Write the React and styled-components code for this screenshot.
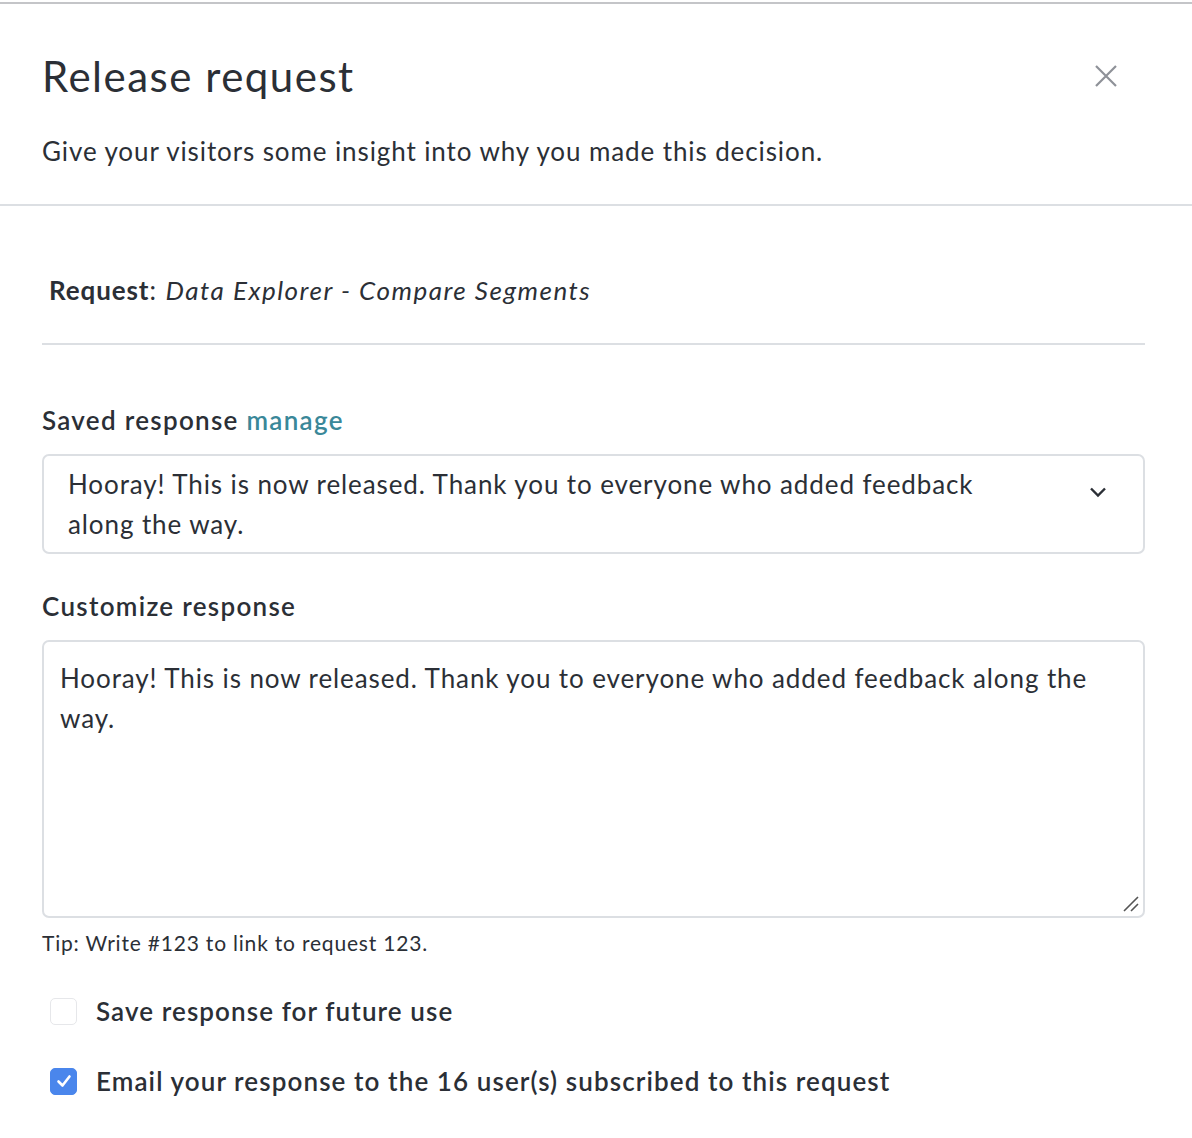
import styled, { createGlobalStyle } from "styled-components";

const GlobalStyle = createGlobalStyle`
    html, body {
        margin: 0;
        padding: 0;
        background: #ffffff;
    }
    body {
        font-family: Lato, "Open Sans", sans-serif;
        color: #2b2f36;
        letter-spacing: 0.9px;
    }
`;

const Modal = styled.div`
    width: 1192px;
    border-top: 2px solid #c4c5c8;
    margin-top: 2px;
`;

const Header = styled.div`
    padding: 44px 42px 35px 42px;
    border-bottom: 2px solid #dcdfe3;
    .titleRow {
        display: flex;
        justify-content: space-between;
        align-items: center;
        height: 56px;
    }
`;

const Title = styled.h1`
    margin: 0;
    font-size: 42px;
    font-weight: 400;
    letter-spacing: 1.5px;
    color: #2b2f36;
`;

const CloseButton = styled.button`
    border: none;
    background: none;
    padding: 0;
    margin-right: 33px;
    color: #8e9198;
    display: flex;
    cursor: pointer;
`;

const Subtitle = styled.p`
    margin: 29px 0 0 0;
    font-size: 26px;
    line-height: 36px;
`;

const Body = styled.div`
    padding: 0 47px 0 42px;
`;

const RequestLine = styled.div`
    padding: 68px 7px 37px 7px;
    font-size: 26px;
    line-height: 32px;
    letter-spacing: 1.5px;
    border-bottom: 2px solid #dcdfe3;
    strong {
        font-weight: 700;
        letter-spacing: 0.9px;
    }
    em {
        font-style: italic;
    }
`;

const Label = styled.div`
    font-size: 26px;
    font-weight: 600;
    line-height: 32px;
    letter-spacing: 1.3px;
    margin: ${(p) => p.$top}px 0 ${(p) => p.$bottom}px 0;
    a {
        color: #3a8899;
        text-decoration: none;
        font-weight: 600;
    }
`;

const Select = styled.div`
    display: flex;
    align-items: flex-start;
    justify-content: space-between;
    border: 2px solid #dcdfe3;
    border-radius: 7px;
    padding: 8px 36px 8px 24px;
    font-size: 26px;
    line-height: 40px;
    .text {
        max-width: 940px;
    }
    .chevron {
        margin-top: 22px;
        color: #2b2f36;
    }
`;

const TextArea = styled.div`
    position: relative;
    border: 2px solid #dcdfe3;
    border-radius: 7px;
    height: 278px;
    padding: 16px 20px 0 16px;
    box-sizing: border-box;
    font-size: 26px;
    line-height: 40px;
    .grip {
        position: absolute;
        right: 4px;
        bottom: 4px;
    }
`;

const Tip = styled.div`
    font-size: 21px;
    line-height: 28px;
    margin-top: 11px;
    letter-spacing: 0.8px;
`;

const CheckRow = styled.label`
    display: flex;
    align-items: center;
    gap: 19px;
    padding-left: 8px;
    margin-top: ${(p) => p.$top}px;
    font-size: 26px;
    font-weight: 600;
    line-height: 32px;
    letter-spacing: 1.1px;
`;

const Box = styled.span`
    width: 27px;
    height: 27px;
    box-sizing: border-box;
    border-radius: 5px;
    display: flex;
    align-items: center;
    justify-content: center;
    flex-shrink: 0;
    background: ${(p) => (p.$checked ? "#4a86ec" : "#ffffff")};
    border: 1px solid ${(p) => (p.$checked ? "#4a86ec" : "#e6e7ea")};
`;

const Check = ({ checked, label, top }) => (
    <CheckRow $top={top}>
        <Box $checked={checked}>
            {checked && (
                <svg width="18" height="18" viewBox="0 0 18 18" fill="none">
                    <path d="M3.5 9.5 L7.5 13.5 L14.5 4.5" stroke="#fff" strokeWidth="2.6" strokeLinecap="round" strokeLinejoin="round" />
                </svg>
            )}
        </Box>
        {label}
    </CheckRow>
);

const message = "Hooray! This is now released. Thank you to everyone who added feedback along the way.";

export default function App() {
    return (
        <>
            <GlobalStyle />
            <Modal>
                <Header>
                    <div className="titleRow">
                        <Title>Release request</Title>
                        <CloseButton>
                            <svg width="22" height="22" viewBox="0 0 22 22">
                                <path d="M1 1 L21 21 M21 1 L1 21" stroke="currentColor" strokeWidth="2.2" />
                            </svg>
                        </CloseButton>
                    </div>
                    <Subtitle>Give your visitors some insight into why you made this decision.</Subtitle>
                </Header>
                <Body>
                    <RequestLine>
                        <strong>Request</strong>: <em>Data Explorer - Compare Segments</em>
                    </RequestLine>
                    <Label $top={59} $bottom={18}>
                        Saved response <a href="#">manage</a>
                    </Label>
                    <Select>
                        <div className="text">{message}</div>
                        <svg className="chevron" width="18" height="12" viewBox="0 0 18 12" fill="none">
                            <path d="M2 2.5 L9 9.5 L16 2.5" stroke="currentColor" strokeWidth="2.4" />
                        </svg>
                    </Select>
                    <Label $top={36} $bottom={18}>
                        Customize response
                    </Label>
                    <TextArea>
                        {message}
                        <svg className="grip" width="16" height="16" viewBox="0 0 16 16">
                            <path d="M1 15 L15 1 M8 15 L15 8" stroke="#555" strokeWidth="1.6" />
                        </svg>
                    </TextArea>
                    <Tip>Tip: Write #123 to link to request 123.</Tip>
                    <Check top={38} label="Save response for future use" />
                    <Check top={38} checked label="Email your response to the 16 user(s) subscribed to this request" />
                </Body>
            </Modal>
        </>
    );
}
